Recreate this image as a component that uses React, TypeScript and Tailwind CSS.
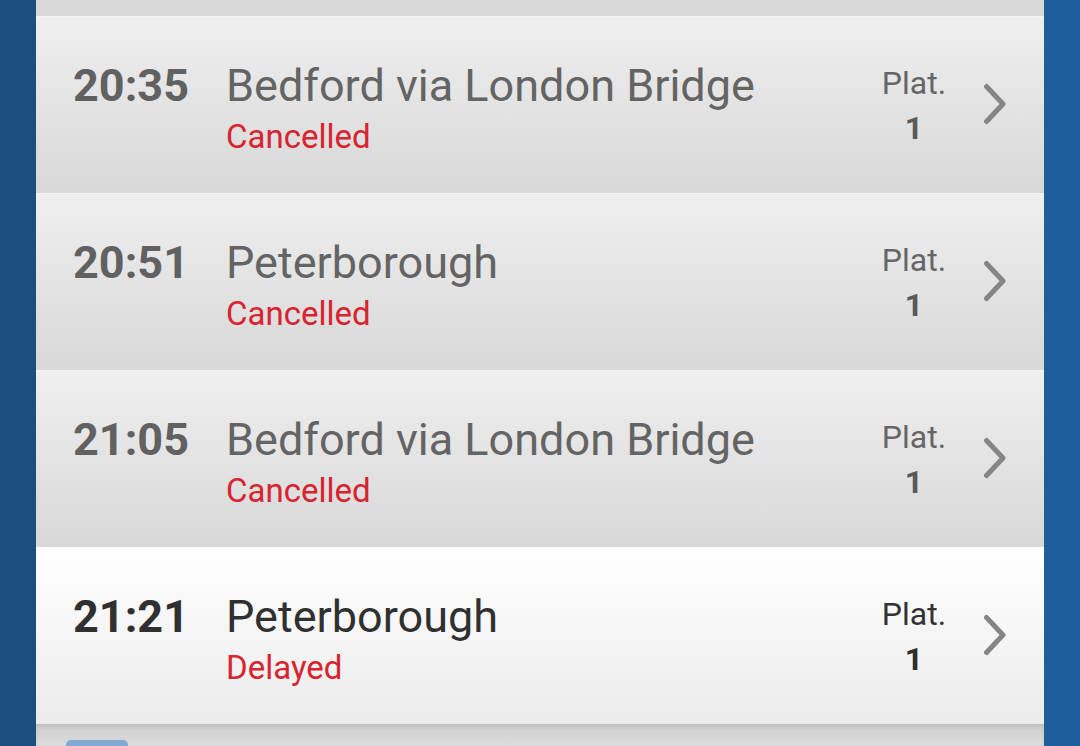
import React from 'react';

type Departure = {
  time: string;
  destination: string;
  status: string;
  platform: string;
  active?: boolean;
};

const departures: Departure[] = [
  { time: '20:35', destination: 'Bedford via London Bridge', status: 'Cancelled', platform: '1' },
  { time: '20:51', destination: 'Peterborough', status: 'Cancelled', platform: '1' },
  { time: '21:05', destination: 'Bedford via London Bridge', status: 'Cancelled', platform: '1' },
  { time: '21:21', destination: 'Peterborough', status: 'Delayed', platform: '1', active: true },
];

function Chevron() {
  return (
    <svg width="24" height="42" viewBox="0 0 24 42" className="shrink-0">
      <path
        d="M3.5 3.5 L20 21 L3.5 38.5"
        fill="none"
        stroke="#858585"
        strokeWidth="5"
        strokeLinecap="round"
        strokeLinejoin="round"
      />
    </svg>
  );
}

function DepartureRow({ dep }: { dep: Departure }) {
  const bg = dep.active
    ? 'bg-gradient-to-b from-[#ffffff] to-[#ebebeb] border-[#ffffff]'
    : 'bg-gradient-to-b from-[#efefef] to-[#d8d8d8] border-[#f4f4f4]';
  const timeColor = dep.active ? 'text-[#303030]' : 'text-[#616161]';
  const destColor = dep.active ? 'text-[#303030]' : 'text-[#646464]';
  const platColor = dep.active ? 'text-[#333333]' : 'text-[#666666]';
  const numColor = dep.active ? 'text-[#2e2e2e]' : 'text-[#5a5a5a]';

  return (
    <div className={`h-[177px] shrink-0 border-t flex items-start pl-[37px] pr-[37px] ${bg}`}>
      <div className={`w-[153px] pt-[42px] text-[45px] leading-[54px] font-bold ${timeColor}`}>
        {dep.time}
      </div>
      <div className="flex-1 pt-[42px]">
        <div className={`text-[45px] leading-[54px] ${destColor}`}>{dep.destination}</div>
        <div className="mt-[4px] text-[33px] leading-[40px] text-[#d7242e]">{dep.status}</div>
      </div>
      <div className="w-[100px] pt-[44px] text-center">
        <div className={`text-[32px] leading-[45px] ${platColor}`}>Plat.</div>
        <div className={`text-[32px] leading-[45px] font-bold ${numColor}`}>{dep.platform}</div>
      </div>
      <div className="ml-[19px] pt-[66px]">
        <Chevron />
      </div>
    </div>
  );
}

export default function App() {
  return (
    <div
      className="w-[1080px] h-[746px] overflow-hidden flex"
      style={{ fontFamily: 'Roboto, "Noto Sans", sans-serif' }}
    >
      <div className="w-[36px] shrink-0 bg-[#1c4e80]" />
      <div className="flex-1 flex flex-col overflow-hidden">
        <div className="h-[16px] shrink-0 bg-[#d9d9d9]" />
        {departures.map((dep) => (
          <DepartureRow key={dep.time} dep={dep} />
        ))}
        <div className="flex-1 min-h-0 overflow-hidden bg-gradient-to-b from-[#cfcfcf] to-[#dcdcdc] pt-[16px] pl-[30px] shadow-[inset_0_3px_4px_rgba(0,0,0,0.08)]">
          <div className="w-[62px] h-[20px] rounded-t-[5px] bg-[#80aad3]" />
        </div>
      </div>
      <div className="w-[36px] shrink-0 bg-[#1f5e9c]" />
    </div>
  );
}
